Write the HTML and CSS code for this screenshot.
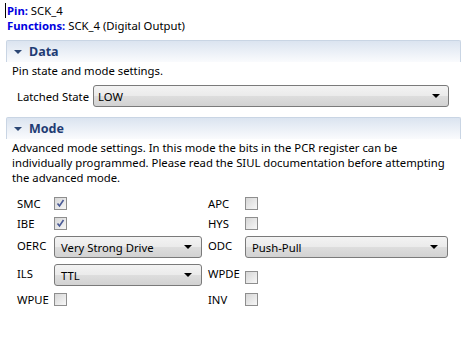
FILE: index.html
```html
<!DOCTYPE html>
<html lang="en">
<head>
  <meta charset="UTF-8">
  <title>Pin Settings</title>
  <link rel="stylesheet" href="styles.css">
</head>
<body>
  <div class="info">
    <p><b>Pin:</b> SCK_4</p>
    <p><b>Functions:</b> SCK_4 (Digital Output)</p>
  </div>

  <section class="sect">
    <div class="sect-head"><span class="tri"></span>Data</div>
    <div class="sect-body">
      <p class="desc">Pin state and mode settings.</p>
      <div class="latched">
        <span class="lbl">Latched State</span>
        <div class="combo wide"><span>LOW</span><i class="arrow"></i></div>
      </div>
    </div>
  </section>

  <section class="sect mode">
    <div class="sect-head"><span class="tri"></span>Mode</div>
    <div class="sect-body">
      <p class="desc">Advanced mode settings. In this mode the bits in the PCR register can be<br>individually programmed. Please read the SIUL documentation before attempting<br>the advanced mode.</p>
      <div class="grid">
        <span class="lbl">SMC</span>
        <span class="cb"><svg viewBox="0 0 11 11" width="11" height="11"><path d="M2.5 5.5 L4.5 8 L8.5 2" fill="none" stroke="#4a5a96" stroke-width="1.6"/></svg></span>
        <span class="lbl">APC</span>
        <span class="cb"></span>

        <span class="lbl">IBE</span>
        <span class="cb"><svg viewBox="0 0 11 11" width="11" height="11"><path d="M2.5 5.5 L4.5 8 L8.5 2" fill="none" stroke="#4a5a96" stroke-width="1.6"/></svg></span>
        <span class="lbl">HYS</span>
        <span class="cb"></span>

        <span class="lbl top">OERC</span>
        <div class="combo left"><span>Very Strong Drive</span><i class="arrow"></i></div>
        <span class="lbl top">ODC</span>
        <div class="combo"><span>Push-Pull</span><i class="arrow"></i></div>

        <span class="lbl top">ILS</span>
        <div class="combo left"><span>TTL</span><i class="arrow"></i></div>
        <span class="lbl top">WPDE</span>
        <span class="cb low"></span>

        <span class="lbl">WPUE</span>
        <span class="cb"></span>
        <span class="lbl">INV</span>
        <span class="cb"></span>
      </div>
    </div>
  </section>
</body>
</html>
```

FILE: styles.css
```css
body {
  margin: 0;
  padding: 0 3px 0 6px;
  font-family: "Noto Sans", "Open Sans", sans-serif;
  font-size: 11.3px;
  color: #000;
  background-color: #fff;
}

p {
  margin: 0;
}

.info {
  padding-top: 3px;
  line-height: 15px;
}

.info p {
  padding-left: 1px;
}

.info b {
  color: #0000e0;
}

.info p:first-child {
  border-left: 1px solid #000;
  margin-left: -1px;
  height: 15px;
}

.sect {
  margin-top: 7px;
}

.sect-head {
  height: 21px;
  display: flex;
  align-items: center;
  border: 1px solid #c9d5e4;
  border-bottom: none;
  border-radius: 2px 2px 0 0;
  background: linear-gradient(#dbe4f0, #fafbfd);
  color: #1f3c74;
  font-weight: bold;
  font-size: 12.5px;
  padding-left: 7px;
}

.tri {
  width: 0;
  height: 0;
  border-left: 4px solid transparent;
  border-right: 4px solid transparent;
  border-top: 4px solid #2c4774;
  margin-right: 7px;
}

.sect-body {
  padding-left: 6px;
}

.desc {
  line-height: 15px;
  padding-top: 1px;
  white-space: nowrap;
}

.latched {
  display: flex;
  align-items: center;
  margin-top: 7px;
}

.latched .lbl {
  padding-left: 5px;
  white-space: nowrap;
  box-sizing: border-box;
  width: 81px;
}

.combo {
  height: 20px;
  display: flex;
  align-items: center;
  justify-content: space-between;
  border: 1px solid #7a7a7a;
  border-radius: 3px;
  background: linear-gradient(#f3f3f3 0%, #ebebeb 48%, #dddddd 52%, #d2d2d2 100%);
  padding: 0 8px 0 4px;
  box-sizing: content-box;
  white-space: nowrap;
}

.combo span {
  padding-top: 1px;
}

.combo.wide {
  width: 342px;
}

.arrow {
  width: 0;
  height: 0;
  border-left: 4px solid transparent;
  border-right: 4px solid transparent;
  border-top: 4px solid #000;
}

.mode {
  margin-top: 10px;
}

.grid {
  display: grid;
  grid-template-columns: 37px 154px 37px 203px;
  grid-template-rows: 14px 14px 22px 22px 14px;
  row-gap: 6px;
  margin-top: 11px;
  padding-left: 5px;
  align-items: center;
}

.grid .combo {
  height: 20px;
  padding: 0 9px 0 6px;
  width: 186px;
}

.grid .combo.left {
  width: 131px;
}

.lbl.top {
  align-self: start;
  padding-top: 2px;
}

.cb {
  width: 11px;
  height: 11px;
  border: 1px solid #8e8e8e;
  background: linear-gradient(135deg, #d6d6d6, #f7f7f7);
  display: flex;
  align-items: center;
  justify-content: center;
}

.cb.low {
  margin-top: 4px;
}
```
